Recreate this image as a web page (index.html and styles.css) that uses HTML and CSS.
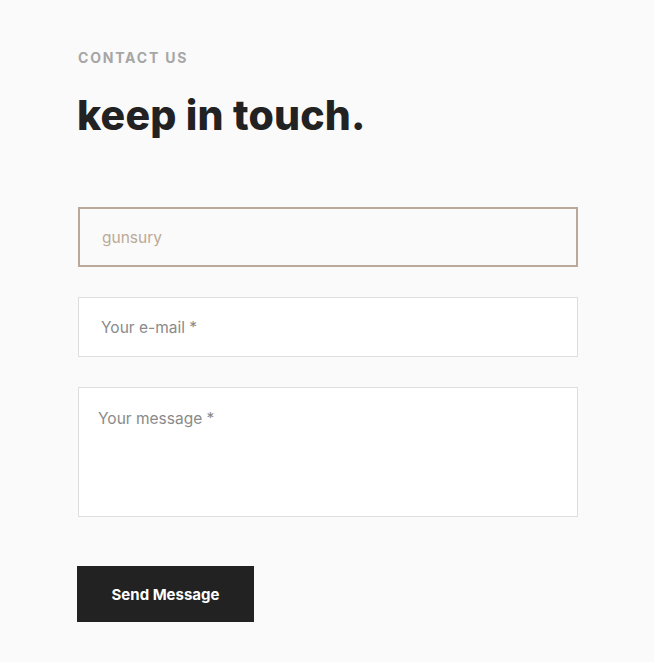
FILE: index.html
```html
<!DOCTYPE html>
<html>
<head>
<meta charset="utf-8">
<link rel="stylesheet" href="styles.css">
</head>
<body>
<section class="contact">
  <p class="eyebrow">CONTACT US</p>
  <h1 class="title">keep in touch.</h1>
  <form class="form">
    <input class="field field-active" type="text" value="gunsury">
    <input class="field" type="email" placeholder="Your e-mail *">
    <textarea class="field field-area" placeholder="Your message *"></textarea>
    <button class="send" type="button">Send Message</button>
  </form>
</section>
</body>
</html>
```

FILE: styles.css
```css
* { box-sizing: border-box; }
html, body { margin: 0; padding: 0; background: #fafafa; }
body { font-family: Inter, "Liberation Sans", sans-serif; }
.contact {
  padding: 50px 76px 40px 78px;
  display: flex;
  flex-direction: column;
}
.eyebrow {
  margin: 0;
  font-size: 14px;
  line-height: 16px;
  font-weight: 700;
  letter-spacing: 1.8px;
  color: #a6a6a6;
}
.title {
  margin: 23px 0 0 -1px;
  font-size: 41px;
  line-height: 52px;
  font-weight: 800;
  letter-spacing: 0.2px;
  color: #222;
}
.form {
  margin-top: 66px;
  display: flex;
  flex-direction: column;
  gap: 30px;
  width: 500px;
}
.field {
  display: block;
  width: 500px;
  height: 60px;
  margin: 0;
  padding: 0 22px;
  border: 1px solid #dedede;
  background: #fff;
  font-family: inherit;
  font-size: 15.5px;
  color: #888;
  outline: none;
}
.field::placeholder { color: #8a8a8a; opacity: 1; }
.field-active {
  border: 2px solid #b9a99c;
  background: #fafafa;
  color: #bba997;
}
.field-area {
  height: 130px;
  padding: 21px 19px;
  resize: none;
}
.send {
  margin: 19px 0 0 -1px;
  width: 177px;
  height: 56px;
  border: none;
  background: #222;
  color: #fff;
  font-family: inherit;
  font-size: 15px;
  font-weight: 700;
  cursor: pointer;
}
```
